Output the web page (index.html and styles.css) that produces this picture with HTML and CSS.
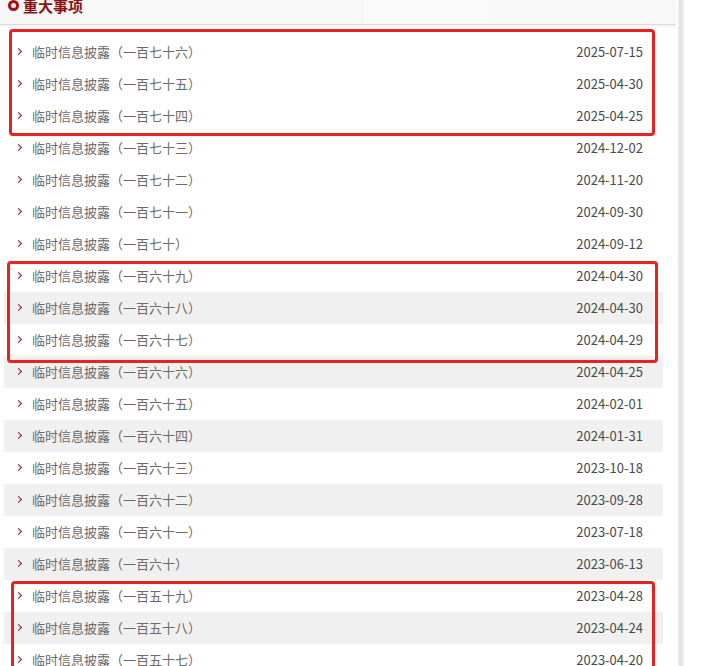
FILE: index.html
```html
<!DOCTYPE html>
<html lang="zh-CN">
<head>
    <meta charset="UTF-8">
    <title>重大事项</title>
    <link rel="stylesheet" href="styles.css">
</head>
<body>
    <div class="page">
        <div class="panel">
            <div class="panel-head">
                <span class="ring"></span>
                <h2>重大事项</h2>
            </div>
            <ul class="news-list">
                <li><span class="title">临时信息披露（一百七十六）</span><span class="date">2025-07-15</span></li>
                <li><span class="title">临时信息披露（一百七十五）</span><span class="date">2025-04-30</span></li>
                <li><span class="title">临时信息披露（一百七十四）</span><span class="date">2025-04-25</span></li>
                <li><span class="title">临时信息披露（一百七十三）</span><span class="date">2024-12-02</span></li>
                <li><span class="title">临时信息披露（一百七十二）</span><span class="date">2024-11-20</span></li>
                <li><span class="title">临时信息披露（一百七十一）</span><span class="date">2024-09-30</span></li>
                <li><span class="title">临时信息披露（一百七十）</span><span class="date">2024-09-12</span></li>
                <li><span class="title">临时信息披露（一百六十九）</span><span class="date">2024-04-30</span></li>
                <li class="alt"><span class="title">临时信息披露（一百六十八）</span><span class="date">2024-04-30</span></li>
                <li><span class="title">临时信息披露（一百六十七）</span><span class="date">2024-04-29</span></li>
                <li class="alt"><span class="title">临时信息披露（一百六十六）</span><span class="date">2024-04-25</span></li>
                <li><span class="title">临时信息披露（一百六十五）</span><span class="date">2024-02-01</span></li>
                <li class="alt"><span class="title">临时信息披露（一百六十四）</span><span class="date">2024-01-31</span></li>
                <li><span class="title">临时信息披露（一百六十三）</span><span class="date">2023-10-18</span></li>
                <li class="alt"><span class="title">临时信息披露（一百六十二）</span><span class="date">2023-09-28</span></li>
                <li><span class="title">临时信息披露（一百六十一）</span><span class="date">2023-07-18</span></li>
                <li class="alt"><span class="title">临时信息披露（一百六十）</span><span class="date">2023-06-13</span></li>
                <li><span class="title">临时信息披露（一百五十九）</span><span class="date">2023-04-28</span></li>
                <li class="alt"><span class="title">临时信息披露（一百五十八）</span><span class="date">2023-04-24</span></li>
                <li><span class="title">临时信息披露（一百五十七）</span><span class="date">2023-04-20</span></li>
            </ul>
        </div>
        <div class="side"></div>

        <!-- annotation boxes drawn over the list -->
        <div class="mark mark-1"></div>
        <div class="mark mark-2"></div>
        <div class="mark mark-3"></div>
    </div>
</body>
</html>
```

FILE: styles.css
```css
* {
    margin: 0;
    padding: 0;
    box-sizing: border-box;
}

body {
    font-family: "Noto Sans CJK SC", "Noto Sans", sans-serif;
    background: #fff;
    overflow: hidden;
}

.page {
    position: relative;
    display: flex;
    height: 666px;
}

.panel {
    width: 678px;
    background: #fff;
}

.side {
    width: 6px;
    background: linear-gradient(90deg, #ececec, #e2e2e2, #efefef);
}

.panel-head {
    display: flex;
    align-items: center;
    gap: 4px;
    height: 25px;
    padding: 0 0 13px 8px;
    margin-bottom: 11px;
    background: linear-gradient(90deg, #f7f7f7 0, #f9f9f9 361px, #f3f3f3 362px, #fafafa 363px, #f8f8f8 100%);
    border-bottom: 1px solid #dcdcdc;
    box-shadow: 0 2px 3px rgba(0, 0, 0, 0.05);
    width: 676px;
}

.ring {
    width: 11px;
    height: 11px;
    border: 3px solid #a80e12;
    border-radius: 50%;
}

.panel-head h2 {
    font-size: 15px;
    font-weight: bold;
    color: #8a1417;
    line-height: 14px;
}

.news-list {
    list-style: none;
    width: 659px;
    margin-left: 4px;
}

.news-list li {
    display: flex;
    align-items: center;
    justify-content: space-between;
    height: 32px;
    padding: 0 20px 2px 28px;
    font-size: 13px;
    position: relative;
}

.news-list li::before {
    content: "";
    position: absolute;
    left: 12px;
    top: 13px;
    width: 4px;
    height: 4px;
    border-top: 1.5px solid #a3161a;
    border-right: 1.5px solid #a3161a;
    transform: rotate(45deg);
}

.news-list li.alt {
    background: #f0f0f0;
}

.title {
    color: #6a6a6a;
}

.date {
    color: #4a4a4a;
}

.mark {
    position: absolute;
    border: 3px solid #e8231f;
    border-radius: 4px;
}

.mark-1 {
    left: 9px;
    top: 29px;
    width: 646px;
    height: 107px;
}

.mark-2 {
    left: 7px;
    top: 261px;
    width: 651px;
    height: 102px;
}

.mark-3 {
    left: 11px;
    top: 581px;
    width: 644px;
    height: 100px;
}
```
